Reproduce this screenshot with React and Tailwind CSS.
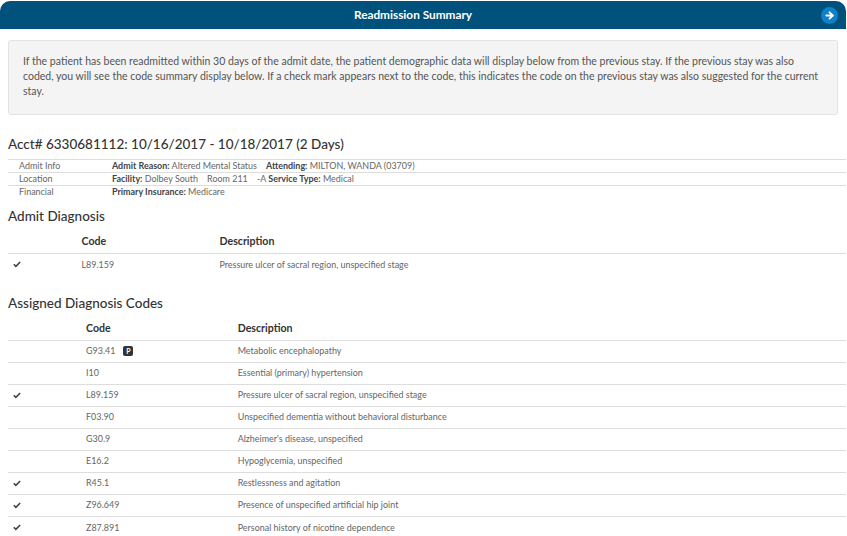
import React from 'react';
import { ArrowRight } from 'lucide-react';

const Check = () => (
  <svg viewBox="0 0 12 10" className="w-[8px] h-[7px] fill-[#3a3f44]">
    <path d="M4.3 9.4 0.4 5.5l1.7-1.7 2.2 2.2L9.9 0.4l1.7 1.7z" />
  </svg>
);

const admitCodes = [{ check: true, code: 'L89.159', desc: 'Pressure ulcer of sacral region, unspecified stage' }];

const assignedCodes = [
  { code: 'G93.41', poa: true, desc: 'Metabolic encephalopathy' },
  { code: 'I10', desc: 'Essential (primary) hypertension' },
  { check: true, code: 'L89.159', desc: 'Pressure ulcer of sacral region, unspecified stage' },
  { code: 'F03.90', desc: 'Unspecified dementia without behavioral disturbance' },
  { code: 'G30.9', desc: "Alzheimer's disease, unspecified" },
  { code: 'E16.2', desc: 'Hypoglycemia, unspecified' },
  { check: true, code: 'R45.1', desc: 'Restlessness and agitation' },
  { check: true, code: 'Z96.649', desc: 'Presence of unspecified artificial hip joint' },
  { check: true, code: 'Z87.891', desc: 'Personal history of nicotine dependence' },
];

const CodeTable = ({ rows, codeCol, codeWidth }) => (
  <div className="ml-2 w-[838px] text-[8.95px]">
    <div className="flex items-center h-[24px] border-b border-[#ddd] text-[10.6px] font-bold text-[#333]">
      <div className={codeCol} />
      <div className={codeWidth}>Code</div>
      <div>Description</div>
    </div>
    {rows.map((row, idx) => (
      <div key={idx} className="flex items-center h-[22px] pb-px border-b border-[#ddd] last:border-b-0 text-[#666]">
        <div className={`${codeCol} pl-[5px]`}>{row.check && <Check />}</div>
        <div className={`${codeWidth} flex items-center`}>
          {row.code}
          {row.poa && (
            <span className="ml-[8px] w-[10px] h-[10px] rounded-[2px] bg-[#333] text-white text-[7px] font-bold flex items-center justify-center">P</span>
          )}
        </div>
        <div>{row.desc}</div>
      </div>
    ))}
  </div>
);

const InfoRow = ({ label, children }) => (
  <div className="flex items-center h-[13px] pb-px border-t border-[#ddd] text-[8.95px] text-[#666]">
    <div className="w-[104px] pl-[11px]">{label}</div>
    <div className="whitespace-pre">{children}</div>
  </div>
);

const App = () => {
  return (
    <div className="w-[847px] h-[536px] overflow-hidden bg-white font-['Lato',sans-serif]">
      <div className="mt-px w-[846px] pr-[20px] h-[28px] bg-[#00517c] rounded-t-[10px] flex items-center justify-center relative">
        <span className="text-white text-[11.8px] font-bold">Readmission Summary</span>
        <span className="absolute right-[8px] top-[6px] w-[17px] h-[17px] rounded-full bg-[#0a82cc] flex items-center justify-center">
          <ArrowRight className="w-[11px] h-[11px] text-white" strokeWidth={4} />
        </span>
      </div>

      <div className="mt-[11px] mx-2 w-[830px] h-[75px] bg-[#f4f4f4] border border-[#e3e3e3] rounded-[3px] pt-[13px] px-[14px] text-[10.53px] leading-[15px] text-[#555]">
        If the patient has been readmitted within 30 days of the admit date, the patient demographic data will display below from the previous stay. If the previous stay was also coded, you will see the code summary display below. If a check mark appears next to the code, this indicates the code on the previous stay was also suggested for the current stay.
      </div>

      <h2 className="mt-[20px] ml-2 h-[18px] leading-[18px] text-[13.5px] font-medium text-[#333]">Acct# 6330681112: 10/16/2017 - 10/18/2017 (2 Days)</h2>

      <div className="mt-[6px] ml-2 w-[838px]">
        <InfoRow label="Admit Info">
          <b className="text-[#444]">Admit Reason:</b> Altered Mental Status{'    '}<b className="text-[#444]">Attending:</b> MILTON, WANDA (03709)
        </InfoRow>
        <InfoRow label="Location">
          <b className="text-[#444]">Facility:</b> Dolbey South{'    '}Room 211{'    '}-A <b className="text-[#444]">Service Type:</b> Medical
        </InfoRow>
        <InfoRow label="Financial">
          <b className="text-[#444]">Primary Insurance:</b> Medicare
        </InfoRow>
      </div>

      <h3 className="mt-[9px] ml-2 h-[18px] leading-[18px] text-[13.5px] font-medium text-[#333]">Admit Diagnosis</h3>
      <div className="mt-[5px]">
        <CodeTable rows={admitCodes} codeCol="w-[73.5px]" codeWidth="w-[138px]" />
      </div>

      <h3 className="mt-[18px] ml-2 h-[18px] leading-[18px] text-[13.5px] font-medium text-[#333]">Assigned Diagnosis Codes</h3>
      <div className="mt-[5px]">
        <CodeTable rows={assignedCodes} codeCol="w-[78px]" codeWidth="w-[151.7px]" />
      </div>
    </div>
  );
};

export default App;
